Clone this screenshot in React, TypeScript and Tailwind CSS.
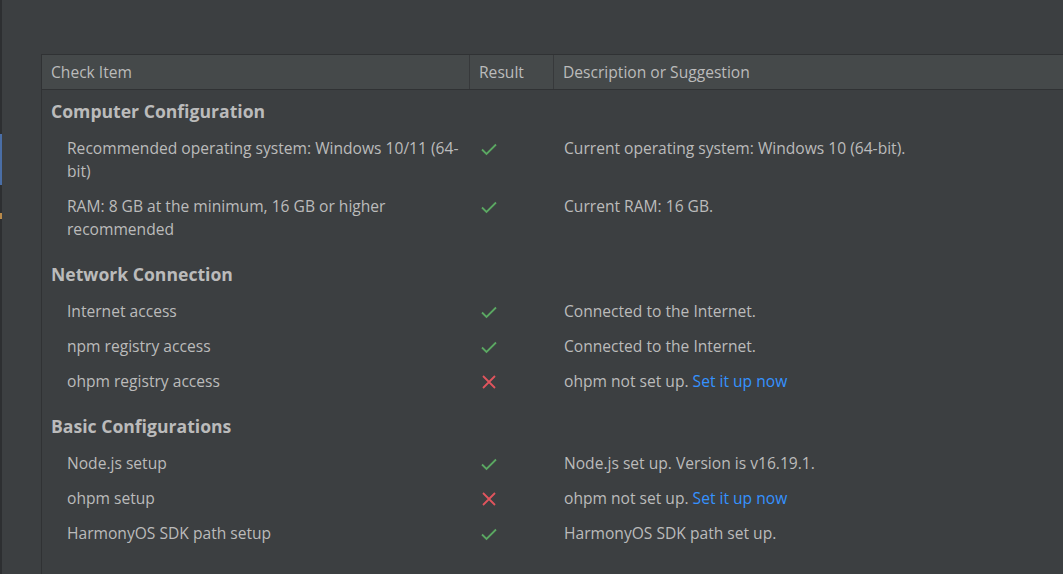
import type { ReactNode } from "react";

type Status = "ok" | "fail";

type CheckRow = {
  item: ReactNode;
  status: Status;
  desc: string;
  link?: string;
};

type Section = {
  title: string;
  rows: CheckRow[];
};

const sections: Section[] = [
  {
    title: "Computer Configuration",
    rows: [
      {
        item: (
          <>
            Recommended operating system: Windows 10/11 (64-
            <br />
            bit)
          </>
        ),
        status: "ok",
        desc: "Current operating system: Windows 10 (64-bit).",
      },
      {
        item: (
          <>
            RAM: 8 GB at the minimum, 16 GB or higher
            <br />
            recommended
          </>
        ),
        status: "ok",
        desc: "Current RAM: 16 GB.",
      },
    ],
  },
  {
    title: "Network Connection",
    rows: [
      { item: "Internet access", status: "ok", desc: "Connected to the Internet." },
      { item: "npm registry access", status: "ok", desc: "Connected to the Internet." },
      { item: "ohpm registry access", status: "fail", desc: "ohpm not set up.", link: "Set it up now" },
    ],
  },
  {
    title: "Basic Configurations",
    rows: [
      { item: "Node.js setup", status: "ok", desc: "Node.js set up. Version is v16.19.1." },
      { item: "ohpm setup", status: "fail", desc: "ohpm not set up.", link: "Set it up now" },
      { item: "HarmonyOS SDK path setup", status: "ok", desc: "HarmonyOS SDK path set up." },
    ],
  },
];

function StatusIcon({ status }: { status: Status }) {
  if (status === "ok") {
    return (
      <svg width="16" height="16" viewBox="0 0 16 16" fill="none" className="block">
        <path d="M1 8.5 L5.5 13 L15 3.5" stroke="#5ba862" strokeWidth="1.8" />
      </svg>
    );
  }
  return (
    <svg width="16" height="16" viewBox="0 0 16 16" fill="none" className="block">
      <path d="M2 2 L14 14 M14 2 L2 14" stroke="#e0555d" strokeWidth="1.8" />
    </svg>
  );
}

export default function App() {
  return (
    <div
      className="flex h-[574px] w-[1063px] overflow-hidden bg-[#3c3f41] text-[15.6px] text-[#bbbbbb]"
      style={{ fontFamily: '"Open Sans", "Noto Sans", sans-serif' }}
    >
      {/* edge of the window behind */}
      <div className="flex w-[2px] shrink-0 flex-col bg-[#2d2f31]">
        <div className="mt-[134px] h-[51px] w-[2px] bg-[#4a6ea6]" />
        <div className="mt-[28px] h-[6px] w-[2px] bg-[#b98a4a]" />
      </div>

      <div className="ml-[39px] mt-[54px] flex flex-1 flex-col border-l border-t border-[#303234]">
        <div className="flex h-[35px] shrink-0 border-b border-[#303234] bg-[#45494a] leading-[34px]">
          <div className="w-[428px] shrink-0 border-r border-[#37393b] pl-[9px]">Check Item</div>
          <div className="w-[84px] shrink-0 border-r border-[#37393b] pl-[9px]">Result</div>
          <div className="flex-1 pl-[9px]">Description or Suggestion</div>
        </div>

        <div className="flex flex-col">
          {sections.map((section, si) => (
            <div key={section.title} className="flex flex-col">
              <div
                className={
                  si === 0
                    ? "pb-[8px] pl-[9px] pt-[9px] text-[17.6px] font-bold leading-[24px]"
                    : "pb-[8px] pl-[9px] pt-[15px] text-[17.6px] font-bold leading-[24px]"
                }
              >
                {section.title}
              </div>
              {section.rows.map((row, ri) => (
                <div key={ri} className="flex py-[6px] leading-[23px]">
                  <div className="w-[429px] shrink-0 pl-[25px] pr-[4px]">{row.item}</div>
                  <div className="w-[84px] shrink-0 pl-[10px] pt-[4px]">
                    <StatusIcon status={row.status} />
                  </div>
                  <div className="flex-1 pl-[9px]">
                    {row.desc}
                    {row.link && <span className="text-[#3592ff]"> {row.link}</span>}
                  </div>
                </div>
              ))}
            </div>
          ))}
        </div>
      </div>
    </div>
  );
}
